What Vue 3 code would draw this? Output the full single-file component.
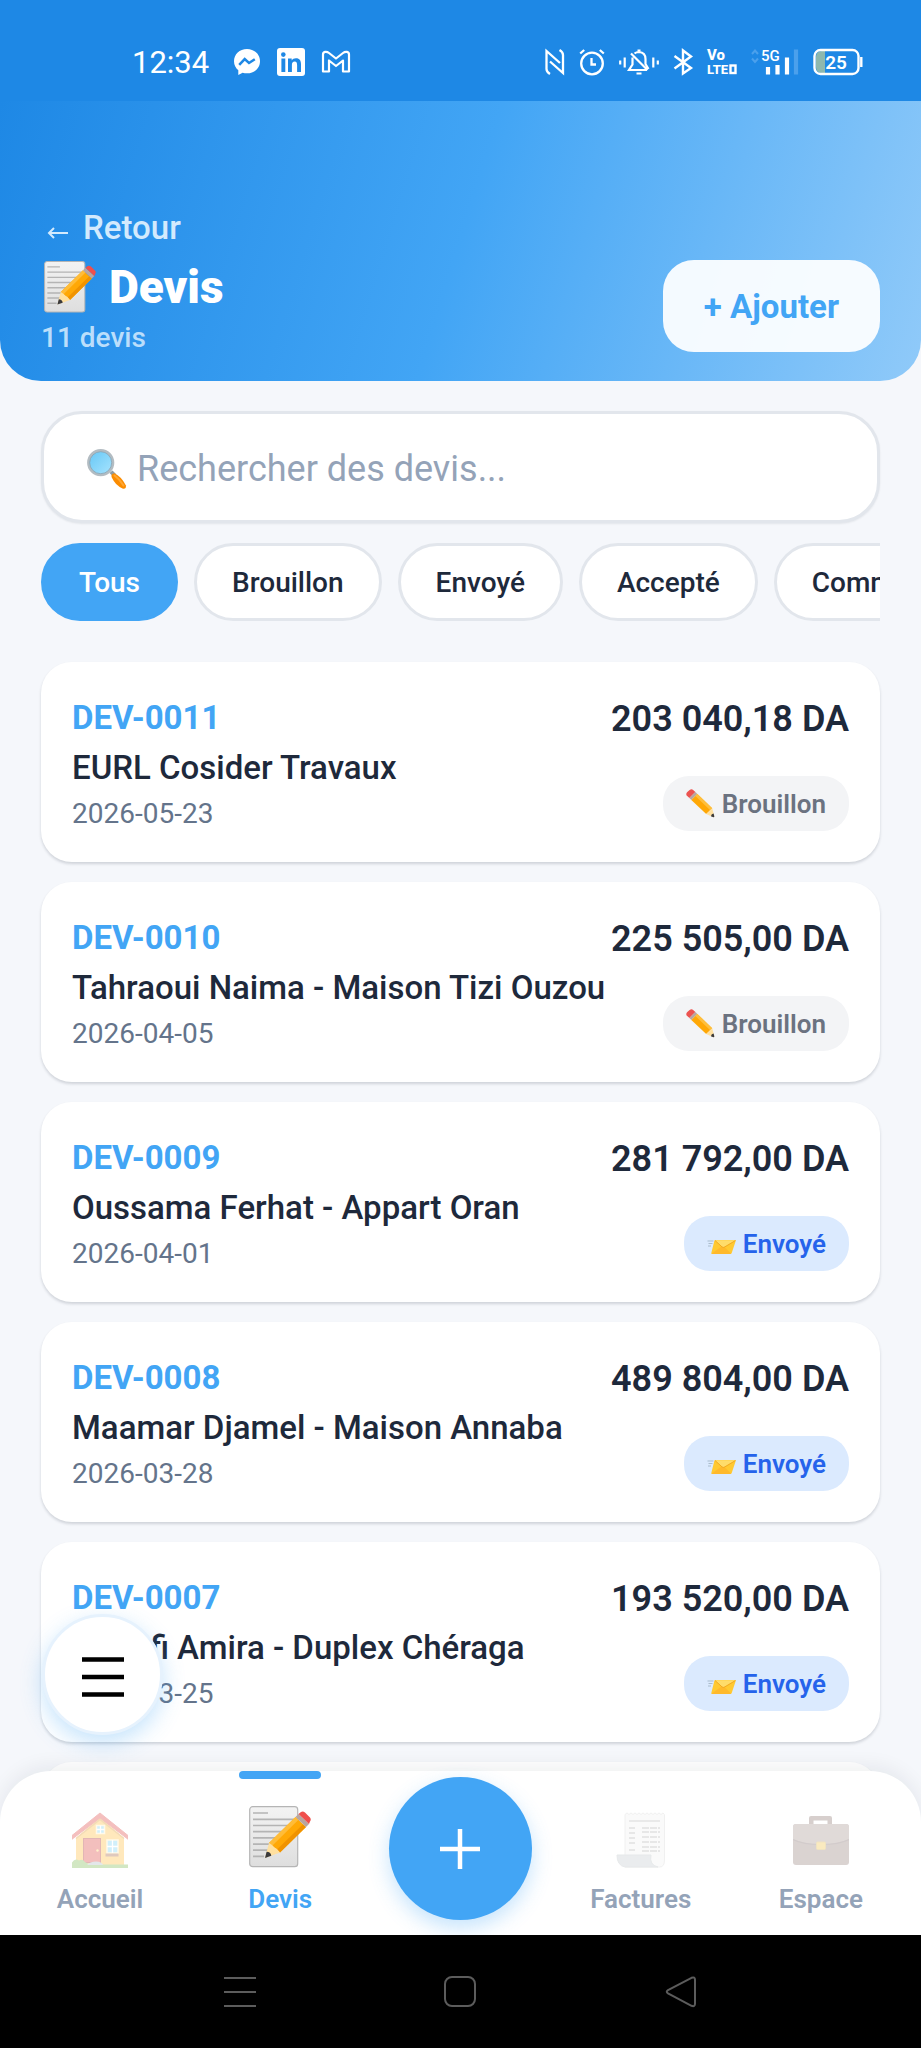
<script setup>
import { computed, ref } from "vue";

const filters = ["Tous", "Brouillon", "Envoyé", "Accepté", "Commandé"];
const activeFilter = ref("Tous");
const query = ref("");

const quotes = ref([
  { id: "DEV-0011", client: "EURL Cosider Travaux", date: "2026-05-23", total: "203 040,18 DA", status: "Brouillon" },
  { id: "DEV-0010", client: "Tahraoui Naima - Maison Tizi Ouzou", date: "2026-04-05", total: "225 505,00 DA", status: "Brouillon" },
  { id: "DEV-0009", client: "Oussama Ferhat - Appart Oran", date: "2026-04-01", total: "281 792,00 DA", status: "Envoyé" },
  { id: "DEV-0008", client: "Maamar Djamel - Maison Annaba", date: "2026-03-28", total: "489 804,00 DA", status: "Envoyé" },
  { id: "DEV-0007", client: "Cherifi Amira - Duplex Chéraga", date: "2026-03-25", total: "193 520,00 DA", status: "Envoyé" },
]);

const badges = {
  Brouillon: { icon: "#i-pencil", tone: "is-draft" },
  Envoyé: { icon: "#i-mail", tone: "is-sent" },
};

const tabsLeft = [
  { label: "Accueil", icon: "#i-house" },
  { label: "Devis", icon: "#i-memo", active: true },
];
const tabsRight = [
  { label: "Factures", icon: "#i-receipt" },
  { label: "Espace", icon: "#i-case" },
];

const visibleQuotes = computed(() => {
  const q = query.value.trim().toLowerCase();
  return quotes.value.filter(
    (d) =>
      (activeFilter.value === "Tous" || d.status === activeFilter.value) &&
      (!q || `${d.id} ${d.client}`.toLowerCase().includes(q))
  );
});
</script>

<template>
  <div class="screen">
    <!-- Shared pictograms, referenced with <use> below. -->
    <svg class="sprite" aria-hidden="true">
      <defs>
        <linearGradient id="g-paper" x1="0" y1="0" x2="0" y2="1">
          <stop offset="0" stop-color="#f3f3f3" />
          <stop offset="1" stop-color="#dedede" />
        </linearGradient>
        <linearGradient id="g-lens" x1="0" y1="0" x2="1" y2="1">
          <stop offset="0" stop-color="#64c6f5" />
          <stop offset="1" stop-color="#a9e5ff" />
        </linearGradient>
      </defs>
      <symbol id="i-memo" viewBox="0 0 62 62">
        <rect x="0.7" y="0.7" width="48" height="60" rx="3" fill="url(#g-paper)" stroke="#b5b5b5" stroke-width="1.2" />
        <path d="M4 7h15M4 13.300h41M4 19.500h41M4 25.700h41M4 31.900h37M4 38.100h30M4 44.200h16M4 50.400h11" stroke="#b4b4b4" stroke-width="1.700" />
        <path d="M20 37 46.500 11 57 21 31 46.500z" fill="#ffa806" />
        <path d="M20 37 46.500 11 49.500 13.800 23 40z" fill="#ffbc38" />
        <path d="M28 43.500 54 18.300 57 21 31 46.500z" fill="#f09300" />
        <path d="M20 37 16 52 31 46.500 28 43 25.500 41.500 23 39z" fill="#ffe0a0" />
        <path d="M17.600 45.700 16 52l6.300-2.200q-.5-4-4.700-4.100z" fill="#3a3a3c" />
        <path d="m46.500 11 3-3L60 18l-3 3z" fill="#b9a6a0" />
        <path d="M49.500 8 52 6q2-1.200 4 .6l5 4.900q1.500 2 0 4L60 18z" fill="#ef4f4c" />
      </symbol>
      <symbol id="i-pencil" viewBox="0 0 29 29">
        <path d="M.6 6.400Q-.3 4.700 1.300 3L3.600.900q2-1.500 3.500 0l2.300 2.200-6 5.900z" fill="#ec5350" />
        <path d="m9.400 3.100 2 1.900-6.100 5.900-1.900-1.900z" fill="#b8a5a0" />
        <path d="M11.400 5 26.200 19.200l-6 5.900L5.300 10.900z" fill="#ffa806" />
        <path d="m11.400 5 14.800 14.200-2 2L9.400 7z" fill="#ffbf3c" />
        <path d="M26.200 19.200 28.300 27.200q.1 1-.9 1l-7.200-3.100z" fill="#ffe0a0" />
        <path d="m27.600 24.500.7 2.700q.1 1-.9 1l-2.500-1q.5-2.500 2.700-2.700z" fill="#3a3a3c" />
      </symbol>
      <symbol id="i-mail" viewBox="0 0 29 29">
        <path d="M.5 12h6M1.500 14.500h4M1 17h3" stroke="#a9bccd" stroke-width="1" />
        <path d="M8.300 11H28q1 0 .7 1l-4 12q-.3 1-1.400 1H5q-1 0-.7-1l3-12q.2-1 1-1z" fill="#ffc931" />
        <path d="m4.800 24.500 9-6.500 2-1 1.500 1 6.800 6.600-.9.400H5z" fill="#ffb92b" />
        <path d="m8.200 11.300 6.800 6.400q1.300 1 2.800 0l10.700-6.500z" fill="#ffdc6a" />
        <path d="m8 11.500 7 6.400q1.300 1 2.800 0L28.500 11.500" fill="none" stroke="#eda01c" stroke-width=".8" />
      </symbol>
      <symbol id="i-search" viewBox="0 0 40 40">
        <path d="m22.500 24 3-2.500 3.500 3.500-3 2.500z" fill="#8d9ba3" />
        <path d="M24.800 28.500q-1.500-3.500 2.700-4.300 6.500 3 11.300 12 .8 3.800-2.800 3.500-7.500-3-11.200-11.200z" fill="#fb8c00" />
        <path d="M27.500 26.500q5 3.500 9 10" fill="none" stroke="#ffa733" stroke-width="2" stroke-linecap="round" />
        <circle cx="13.700" cy="13.700" r="12.300" fill="url(#g-lens)" stroke="#b3bcc2" stroke-width="2.600" />
        <circle cx="13.700" cy="13.700" r="11" fill="none" stroke="#8ba3b1" stroke-width=".8" />
      </symbol>
      <symbol id="i-house" viewBox="0 0 56 56">
        <path d="M4 26 28 5l24 21v29H4z" fill="#ffc85a" />
        <path d="M28 1 0 23.500v3.700L28 6l28 21.200v-3.700z" fill="#e5625f" stroke="#e5625f" stroke-width="1" stroke-linejoin="round" />
        <path d="M4 26.500 28 7.500l24 19" fill="none" stroke="#e2a64d" stroke-width="1.500" />
        <rect x="11.500" y="26.500" width="17" height="24" fill="#e2615c" stroke="#b84a48" />
        <circle cx="25.500" cy="38.500" r="1.200" fill="#ffe082" />
        <path d="M24.500 13.500h8v8h-8z" fill="#8ed8f5" stroke="#fff2cc" stroke-width="1.500" />
        <path d="M28.500 13.500v8m-4-4h8" stroke="#fff" stroke-width="1.300" />
        <path d="M35 28h11v13H35z" fill="#8ed8f5" stroke="#fff2cc" stroke-width="1.500" />
        <path d="M40.500 28v13M35 34.500h11" stroke="#fff" stroke-width="1.300" />
        <path d="M33.500 41.500h13v3h-13z" fill="#b0795e" />
        <path d="M0 56v-5.500q3-4.500 7-2 3.500-1.800 6 1.500l5 2.500h38V56z" fill="#91c46b" />
        <path d="M15 53q3-3.500 9-3.500t7 3.500z" fill="#bac5ca" />
      </symbol>
      <symbol id="i-receipt" viewBox="0 0 56 56">
        <path d="M12 2.500 14 1l2 1.500L18 1l2 1.500L22 1l2 1.500L26 1l2 1.500L30 1l2 1.500L34 1l2 1.500L38 1l2 1.500L42 1l2 1.500L46 1l2 1.500L50 1l1.500 1.500V48q0 7-5 7H12z" fill="#f4f4f4" stroke="#dcdcdc" />
        <path d="M16 9h31" stroke="#b4b4b4" stroke-width="1.300" />
        <path d="M16 16h6M29 16h18M16 21h6M29 20h18M16 26h6M29 25h18M16 31h6M29 30h18M29 35h18M16 38h6M29 39h18" stroke="#b4b4b4" stroke-width="1.500" stroke-dasharray="7 1" />
        <path d="M4 43h34q-2 10 7 12H12Q4 53.500 4 43z" fill="#cbd1d5" stroke="#c3c9cc" />
      </symbol>
      <symbol id="i-case" viewBox="0 0 56 56">
        <path d="M16 13V6q0-2 2-2h19q2 0 2 2v7h-4.500V8.500h-14V13z" fill="#9c8985" />
        <rect y="12" width="56" height="41" rx="3" fill="#a4928e" />
        <path d="M3 12h50q3 0 3 3v12Q46 32 28 32T0 27V15q0-3 3-3z" fill="#b3a4a0" />
        <path d="M0 27.500Q10 32.500 28 32.500t28-5" fill="none" stroke="#918080" stroke-width="1.200" />
        <rect x="23.500" y="30" width="9" height="7.500" rx="1" fill="#f4cd62" stroke="#d9ba68" />
      </symbol>
    </svg>

    <div class="statusbar">
      <div class="statusbar__group is-left">
        <span class="statusbar__time">12:34</span>
        <svg width="28" height="28" viewBox="0 0 28 28" aria-label="Messenger">
          <path d="M14 1C6.500 1 1 6.300 1 13.300c0 3.800 1.700 6.800 4.300 9V27l4.300-2.300c1.400.4 2.800.6 4.400.6 7.500 0 13-5.200 13-12S21.500 1 14 1z" fill="#fff" />
          <path d="m6.200 16.800 5.500-5.700 4.300 3.900 5.800-3.800" fill="none" stroke="#1e88e5" stroke-width="2.500" />
        </svg>
        <svg width="28" height="28" viewBox="0 0 28 28" aria-label="LinkedIn">
          <rect width="28" height="28" rx="3" fill="#fff" />
          <circle cx="6.300" cy="6.600" r="2.300" fill="#1e88e5" />
          <path d="M4.400 10.500h3.900V24H4.400zM11 10.500h3.700v1.900c.8-1.400 2.300-2.200 4.300-2.200 3.800 0 5 2.400 5 6.200V24h-3.900v-6.800c0-2-.4-3.600-2.400-3.600s-2.800 1.400-2.800 3.600V24H11z" fill="#1e88e5" />
        </svg>
        <svg width="30" height="28" viewBox="0 0 30 28" aria-label="Gmail">
          <path d="M2 23.500V6.500C2 3.500 5.500 3 8 5l7 5.500L22 5c2.500-2 6-1.500 6 1.500v17h-6V12.500l-7 5.500-7-5.500v11z" fill="none" stroke="#fff" stroke-width="2.200" stroke-linejoin="round" />
        </svg>
      </div>
      <div class="statusbar__group is-right">
        <svg width="20" height="28" viewBox="0 0 20 28" aria-label="NFC">
          <path d="M5 26q-3.500-2-3.500-5V3L15 15M14.500 2q3.500 2 3.500 5v18L5 13.500" fill="none" stroke="#fff" stroke-width="2.300" />
        </svg>
        <svg width="26" height="28" viewBox="0 0 26 28" aria-label="Alarme">
          <circle cx="13" cy="15.500" r="10.800" fill="none" stroke="#fff" stroke-width="2.300" />
          <path d="M12.500 10v6.500H17M1.200 5.500l4-3.500M24.800 5.500l-4-3.500" fill="none" stroke="#fff" stroke-width="2.300" />
        </svg>
        <svg width="40" height="28" viewBox="0 0 40 28" aria-label="Vibreur">
          <path d="M1.200 12.500v4M5.700 9.500v10M38.800 12.500v4M34.300 9.500v10" stroke="#fff" stroke-width="2.200" />
          <path d="M13.500 9.500v7l-3.500 5.500h18M15.500 5.500Q17.300 4 20 4q6.500.5 6.500 7v5l3 5M12 5.500 28.500 22" fill="none" stroke="#fff" stroke-width="2.200" />
          <path d="M18.500 2.500h3M17.500 25.500h5" stroke="#fff" stroke-width="2.200" />
        </svg>
        <svg width="20" height="28" viewBox="0 0 20 28" aria-label="Bluetooth">
          <path d="M1.500 8 18 20l-8 5.500v-23L18 8.500 1.500 20.500" fill="none" stroke="#fff" stroke-width="2.400" />
        </svg>
        <svg width="30" height="28" viewBox="0 0 30 28" aria-label="VoLTE">
          <g fill="#fff" font-family="Roboto, sans-serif" font-weight="800">
            <text x="0" y="12" font-size="15">Vo</text>
            <text x="0" y="26" font-size="13">LTE</text>
          </g>
          <rect x="23.500" y="17.500" width="5" height="7.500" fill="none" stroke="#fff" stroke-width="2.400" />
        </svg>
        <svg width="48" height="28" viewBox="0 0 48 28" aria-label="Réseau 5G">
          <path d="m1 6 3-3.500L7 6M1 10.500 4 14l3-3.500" fill="none" stroke="#4ba0ec" stroke-width="2" />
          <text x="10" y="13" font-size="15" fill="#fff" font-family="Roboto, sans-serif" font-weight="500">5G</text>
          <path d="M17 19v7.500M26.500 17v9.500M36 9.500v17" stroke="#fff" stroke-width="4.200" />
          <path d="M45 1.500v25" stroke="#4ba0ec" stroke-width="4.200" />
        </svg>
        <svg width="50" height="28" viewBox="0 0 50 28" aria-label="Batterie 25 %">
          <path d="M12 3H9Q3 3 3 9v10q0 6 6 6h3z" fill="#8db8ae" />
          <rect x="1.500" y="2" width="44" height="24" rx="6" fill="none" stroke="#fff" stroke-width="2.400" />
          <path d="M48.300 9v10" stroke="#fff" stroke-width="2.400" />
          <text x="23" y="20.500" text-anchor="middle" font-size="19" fill="#fff" font-family="Roboto, sans-serif" font-weight="600">25</text>
        </svg>
      </div>
    </div>

    <header class="header">
      <a class="header__back" href="#">
        <svg width="22" height="12" viewBox="0 0 22 12" aria-hidden="true">
          <path d="M7 1 2 6l5 5M2 6h19" fill="none" stroke="currentColor" stroke-width="2" />
        </svg>
        Retour
      </a>
      <div class="header__row">
        <div>
          <h1 class="header__title">
            <svg width="52" height="52" aria-hidden="true"><use href="#i-memo" /></svg>
            Devis
          </h1>
          <p class="header__count">11 devis</p>
        </div>
        <button class="header__add" type="button">+ Ajouter</button>
      </div>
    </header>

    <main class="content">
      <label class="search">
        <svg width="40" height="40" aria-hidden="true"><use href="#i-search" /></svg>
        <input v-model="query" type="text" placeholder="Rechercher des devis..." aria-label="Rechercher des devis" />
      </label>

      <div class="chips">
        <button
          v-for="f in filters"
          :key="f"
          type="button"
          class="chip"
          :class="{ 'is-active': f === activeFilter }"
          @click="activeFilter = f"
        >
          {{ f }}
        </button>
      </div>

      <ul class="list">
        <li v-for="d in visibleQuotes" :key="d.id" class="card">
          <div class="card__info">
            <p class="card__id">{{ d.id }}</p>
            <p class="card__client">{{ d.client }}</p>
            <p class="card__date">{{ d.date }}</p>
          </div>
          <div class="card__side">
            <p class="card__total">{{ d.total }}</p>
            <span class="badge" :class="badges[d.status].tone">
              <svg width="29" height="29" aria-hidden="true"><use :href="badges[d.status].icon" /></svg>
              {{ d.status }}
            </span>
          </div>
        </li>
        <li class="card is-empty" aria-hidden="true"></li>
      </ul>
    </main>

    <nav class="tabbar">
      <button class="menu" type="button" aria-label="Menu">
        <svg width="42" height="42" viewBox="0 0 42 42" aria-hidden="true">
          <path d="M0 3.500h42M0 21h42M0 38.500h42" stroke="#000" stroke-width="4.500" />
        </svg>
      </button>

      <a v-for="t in tabsLeft" :key="t.label" href="#" class="tab" :class="{ 'is-active': t.active }">
        <svg class="tab__icon" aria-hidden="true"><use :href="t.icon" /></svg>
        <span>{{ t.label }}</span>
      </a>
      <div class="tab-create">
        <button class="create" type="button" aria-label="Nouveau devis">
          <svg width="40" height="40" viewBox="0 0 40 40" aria-hidden="true">
            <path d="M20 0v40M0 20h40" stroke="#fff" stroke-width="4.500" />
          </svg>
        </button>
      </div>
      <a v-for="t in tabsRight" :key="t.label" href="#" class="tab">
        <svg class="tab__icon" aria-hidden="true"><use :href="t.icon" /></svg>
        <span>{{ t.label }}</span>
      </a>
    </nav>

    <div class="sysnav">
      <button type="button" aria-label="Applications récentes">
        <svg width="32" height="32" viewBox="0 0 32 32"><path d="M0 2h32M0 16h32M0 30h32" /></svg>
      </button>
      <button type="button" aria-label="Accueil du téléphone">
        <svg width="32" height="32" viewBox="0 0 32 32"><rect x="1" y="1" width="30" height="29" rx="7" /></svg>
      </button>
      <button type="button" aria-label="Précédent">
        <svg width="32" height="32" viewBox="0 0 32 32">
          <path d="M3 14.200 26.500 1.800q3.500-1.300 3.500 2v24q0 3.300-3.500 2L3 17.400q-2.500-1.600 0-3.200z" />
        </svg>
      </button>
    </div>
  </div>
</template>

<style>
body {
  margin: 0;
  background: #f5f7fb;
}
</style>

<style scoped>
.screen {
  display: flex;
  flex-direction: column;
  height: 100vh;
  overflow: hidden;
  background: #f5f7fb;
  color: #1e293b;
  font-family: Roboto, "Liberation Sans", sans-serif;
}
svg {
  flex: none;
  display: block;
  overflow: visible;
}
.sprite {
  position: absolute;
  width: 0;
  height: 0;
}
p,
h1,
ul {
  margin: 0;
  padding: 0;
}
button {
  font: inherit;
  border: 0;
  padding: 0;
  cursor: pointer;
}
a {
  text-decoration: none;
}

/* status bar */
.statusbar {
  display: flex;
  justify-content: space-between;
  padding: 42px 58px 19px 132px;
  background: #1e88e5;
  color: #fff;
}
.statusbar__group {
  display: flex;
  align-items: center;
  height: 40px;
}
.statusbar__group.is-left {
  gap: 16px;
}
.statusbar__group.is-right {
  gap: 14px;
}
.statusbar__time {
  margin-right: 8px;
  font-size: 31px;
}

/* header */
.header {
  padding: 107px 41px 24px;
  border-radius: 0 0 41px 41px;
  background: linear-gradient(107deg, #1e88e5, #42a5f5 50%, #90caf9);
  color: #fff;
}
.header__back {
  display: inline-flex;
  align-items: center;
  gap: 14px;
  padding-left: 6px;
  font-size: 33px;
  font-weight: 500;
  line-height: 39px;
  color: #d3eafd;
}
.header__back svg {
  margin-top: 10px;
}
.header__row {
  display: flex;
  align-items: center;
  justify-content: space-between;
  margin-top: 8px;
}
.header__title {
  display: flex;
  align-items: center;
  gap: 13px;
  padding-left: 3px;
  font-size: 46px;
  font-weight: 900;
  line-height: 64px;
}
.header__count {
  font-size: 28px;
  font-weight: 500;
  line-height: 38px;
  color: #bbdefb;
}
.header__add {
  height: 92px;
  padding: 0 41px;
  border-radius: 31px;
  background: rgba(255, 255, 255, 0.93);
  color: #42a5f5;
  font-size: 33px;
  font-weight: 700;
}

/* list page */
.content {
  flex: 1;
  min-height: 0;
  overflow-y: auto;
  scrollbar-width: none;
  padding: 30px 41px 0;
}
.search {
  display: flex;
  align-items: center;
  gap: 10px;
  height: 102px;
  padding: 4px 43px 0;
  border: 3px solid #e2e6ec;
  border-radius: 41px;
  background: #fff;
  box-shadow: 0 1px 2px rgba(15, 23, 42, 0.08);
}
.search input {
  flex: 1;
  min-width: 0;
  border: 0;
  padding: 0;
  outline: 0;
  background: none;
  color: #1e293b;
  font: inherit;
  font-size: 36px;
}
.search input::placeholder {
  color: #94a3b8;
  opacity: 1;
}
.chips {
  display: flex;
  gap: 16px;
  margin-top: 20px;
  overflow: hidden;
}
.chip {
  flex: none;
  height: 78px;
  padding: 0 35px;
  border: 3px solid #e2e6ec;
  border-radius: 39px;
  background: #fff;
  color: #1e293b;
  font-size: 28px;
  font-weight: 500;
}
.chip.is-active {
  border-color: #42a5f5;
  background: #42a5f5;
  color: #fff;
}
.list {
  display: flex;
  flex-direction: column;
  gap: 20px;
  margin-top: 41px;
  list-style: none;
}
.card {
  display: flex;
  justify-content: space-between;
  padding: 31px;
  border-radius: 31px;
  background: #fff;
  box-shadow: 0 2px 3px rgba(15, 23, 42, 0.16);
  white-space: nowrap;
}
.card.is-empty {
  height: 138px;
}
.card__info {
  flex: 1;
  min-width: 0;
  margin-bottom: -4px;
}
.card__id {
  font-size: 33px;
  font-weight: 700;
  line-height: 50px;
  color: #42a5f5;
}
.card__client {
  font-size: 33px;
  font-weight: 500;
  line-height: 50px;
}
.card__date {
  font-size: 28px;
  line-height: 42px;
  color: #64748b;
}
.card__side {
  display: flex;
  flex-direction: column;
  align-items: flex-end;
  justify-content: space-between;
}
.card__total {
  font-size: 36px;
  font-weight: 600;
  line-height: 52px;
}
.badge {
  display: flex;
  align-items: center;
  gap: 7px;
  height: 55px;
  padding: 0 23px;
  border-radius: 26px;
  font-size: 26px;
  font-weight: 600;
}
.badge.is-draft {
  background: #f3f4f6;
  color: #6b7280;
}
.badge.is-sent {
  background: #dbeafe;
  color: #2563eb;
}

/* bottom tabs, overlapping the end of the list */
.tabbar {
  position: relative;
  display: grid;
  grid-template-columns: repeat(5, 1fr);
  height: 164px;
  margin-top: -51px;
  padding: 0 10px;
  border-radius: 51px 51px 0 0;
  background: #fff;
  box-shadow: 0 -4px 20px rgba(15, 23, 42, 0.07);
}
.tab {
  position: relative;
  display: flex;
  flex-direction: column;
  align-items: center;
  justify-content: flex-end;
  gap: 15px;
  padding-bottom: 20px;
  color: #94a3b8;
  font-size: 26px;
  font-weight: 600;
  line-height: 32px;
}
.tab__icon {
  width: 56px;
  height: 56px;
  opacity: 0.4;
}
.tab.is-active {
  color: #42a5f5;
}
.tab.is-active .tab__icon {
  width: 62px;
  height: 62px;
  opacity: 1;
}
.tab.is-active::before {
  content: "";
  position: absolute;
  top: 0;
  width: 82px;
  height: 8px;
  border-radius: 4px;
  background: #42a5f5;
}
.tab-create {
  display: flex;
  justify-content: center;
  align-items: flex-start;
  padding-top: 6px;
}
.create {
  display: grid;
  place-items: center;
  width: 143px;
  height: 143px;
  border-radius: 50%;
  background: #42a5f5;
  box-shadow: 0 8px 20px rgba(66, 165, 245, 0.3);
}
.menu {
  position: absolute;
  left: 42px;
  bottom: calc(100% + 36px);
  display: grid;
  place-items: center;
  width: 121px;
  height: 121px;
  padding-top: 4px;
  border: 3px solid #e6f2fd;
  border-radius: 50%;
  background: #fff;
  box-shadow: 0 8px 22px rgba(66, 165, 245, 0.3);
}

/* system navigation */
.sysnav {
  position: relative;
  display: grid;
  grid-template-columns: repeat(3, 1fr);
  height: 113px;
  padding: 0 130px;
  background: #000;
}
.sysnav button {
  display: grid;
  place-items: center;
  background: none;
}
.sysnav svg {
  fill: none;
  stroke: #5c5c5c;
  stroke-width: 2;
}
</style>
